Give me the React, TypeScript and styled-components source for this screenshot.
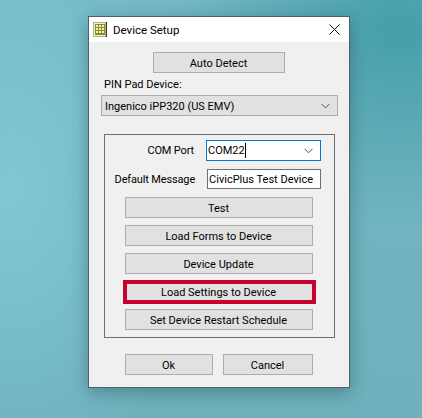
import React from "react";
import styled, { createGlobalStyle } from "styled-components";

const Global = createGlobalStyle`
  html, body { margin: 0; padding: 0; width: 422px; height: 418px; overflow: hidden; }
  * { box-sizing: border-box; }
`;

const Desktop = styled.div`
  width: 422px;
  height: 418px;
  padding: 16px 0 0 88px;
  background:
    radial-gradient(ellipse 220px 200px at 400px 30px, #459eaa 0%, rgba(69,158,170,0) 100%),
    radial-gradient(ellipse 200px 300px at 10px 190px, #80c6d4 0%, rgba(128,198,212,0) 100%),
    linear-gradient(180deg, #74b8c6 0%, #72b5c1 45%, #6eb0bb 100%);
  font-family: Roboto, "Liberation Sans", Arial, sans-serif;
  font-size: 11px;
  color: #000;
`;

const Win = styled.div`
  width: 262px;
  height: 372px;
  background: #f0f0f0;
  border: 1px solid #4c6468;
  box-shadow: 0 4px 16px rgba(30, 60, 70, 0.4);
  display: flex;
  flex-direction: column;
`;

const TitleBar = styled.div`
  height: 25px;
  background: #fff;
  display: flex;
  align-items: center;
  padding: 0 9px 0 4px;
  flex: none;
`;

const Title = styled.span`
  margin-left: 6px;
  flex: 1;
  font-size: 11.5px;
`;

const Body = styled.div`
  flex: 1;
  padding: 10px 11px 0 12px;
  display: flex;
  flex-direction: column;
`;

const Btn = styled.div<{ $w?: number; $outlined?: boolean }>`
  position: relative;
  width: ${(p) => (p.$w ? `${p.$w}px` : "100%")};
  height: 21px;
  flex: none;
  background: #e1e1e1;
  border: 1px solid #adadad;
  display: flex;
  align-items: center;
  justify-content: center;
  padding: 1px 1px 0 0;
  ${(p) =>
    p.$outlined &&
    `&::after {
      content: "";
      position: absolute;
      left: -3px;
      right: -4px;
      top: -2px;
      bottom: -3px;
      border: 4px solid #c8002d;
    }`}
`;

const TopRow = styled.div`
  display: flex;
  justify-content: center;
  padding-right: 1px;
`;

const PinLabel = styled.div`
  margin: 4px 0 0 3px;
  height: 18px;
  line-height: 15px;
`;

const SelectBox = styled.div`
  height: 21px;
  background: #e1e1e1;
  border: 1px solid #adadad;
  display: flex;
  align-items: center;
  justify-content: space-between;
  padding: 1px 7px 0 3px;
`;

const Group = styled.div`
  margin: 18px 3px 0 3px;
  height: 204px;
  border: 1px solid #6f6f6f;
  padding: 5px 13px 0 20px;
  display: flex;
  flex-direction: column;
`;

const FieldRow = styled.div<{ $h: number; $gap: number }>`
  display: flex;
  align-items: center;
  justify-content: flex-end;
  height: ${(p) => p.$h}px;
  margin-bottom: ${(p) => p.$gap}px;
  gap: 12px;
`;

const FieldLabel = styled.span`
  white-space: nowrap;
  letter-spacing: -0.15px;
`;

const Input = styled.div<{ $focus?: boolean; $h: number }>`
  width: 115px;
  height: ${(p) => p.$h}px;
  background: #fff;
  border: 1px solid ${(p) => (p.$focus ? "#0078d7" : "#6f6f6f")};
  display: flex;
  align-items: center;
  justify-content: space-between;
  padding: 0 7px 0 1px;
  white-space: nowrap;
`;

const Caret = styled.span`
  display: inline-flex;
  align-items: center;
  &::after {
    content: "";
    width: 1px;
    height: 15px;
    background: #000;
  }
`;

const Stack = styled.div`
  width: 188px;
  display: flex;
  flex-direction: column;
  gap: 7px;
`;

const Footer = styled.div`
  margin: 16px 0 0 24px;
  display: flex;
  gap: 10px;
`;

const Chevron = () => (
  <svg width="9" height="6" viewBox="0 0 9 6" fill="none" stroke="#555" strokeWidth="1">
    <path d="M0.5 0.8 L4.5 4.8 L8.5 0.8" />
  </svg>
);

const AppIcon = () => (
  <svg width="14" height="15" viewBox="0 0 14 15" style={{ flex: "none" }}>
    <rect x="0.5" y="0.5" width="12" height="14" fill="#f4f0c0" stroke="#b0b0a0" />
    <rect x="2" y="2" width="10" height="11" fill="#8d8d22" />
    <path d="M3 3h2v2H3zM6 3h2v2H6zM9 3h2v2H9zM3 6h2v2H3zM6 6h2v2H6zM9 6h2v2H9zM3 9h2v2H3zM6 9h2v2H6zM9 9h2v2H9z" fill="#f2f2c0" />
    <rect x="13" y="0" width="1" height="15" fill="#333" />
  </svg>
);

const CloseX = () => (
  <svg width="11" height="11" viewBox="0 0 11 11" stroke="#111" strokeWidth="1" fill="none">
    <path d="M0.5 0.5 L10.5 10.5 M10.5 0.5 L0.5 10.5" />
  </svg>
);

export default function App() {
  return (
    <>
      <Global />
      <Desktop>
        <Win>
          <TitleBar>
            <AppIcon />
            <Title>Device Setup</Title>
            <CloseX />
          </TitleBar>
          <Body>
            <TopRow>
              <Btn $w={132}>Auto Detect</Btn>
            </TopRow>
            <PinLabel>PIN Pad Device:</PinLabel>
            <SelectBox>
              <span>Ingenico iPP320 (US EMV)</span>
              <Chevron />
            </SelectBox>
            <Group>
              <FieldRow $h={21} $gap={8}>
                <FieldLabel>COM Port</FieldLabel>
                <Input $focus $h={21}>
                  <Caret>COM22</Caret>
                  <Chevron />
                </Input>
              </FieldRow>
              <FieldRow $h={20} $gap={8}>
                <FieldLabel>Default Message</FieldLabel>
                <Input $h={20}>CivicPlus Test Device</Input>
              </FieldRow>
              <Stack>
                <Btn>Test</Btn>
                <Btn>Load Forms to Device</Btn>
                <Btn>Device Update</Btn>
                <Btn $outlined>Load Settings to Device</Btn>
                <Btn>Set Device Restart Schedule</Btn>
              </Stack>
            </Group>
            <Footer>
              <Btn $w={88}>Ok</Btn>
              <Btn $w={90}>Cancel</Btn>
            </Footer>
          </Body>
        </Win>
      </Desktop>
    </>
  );
}
